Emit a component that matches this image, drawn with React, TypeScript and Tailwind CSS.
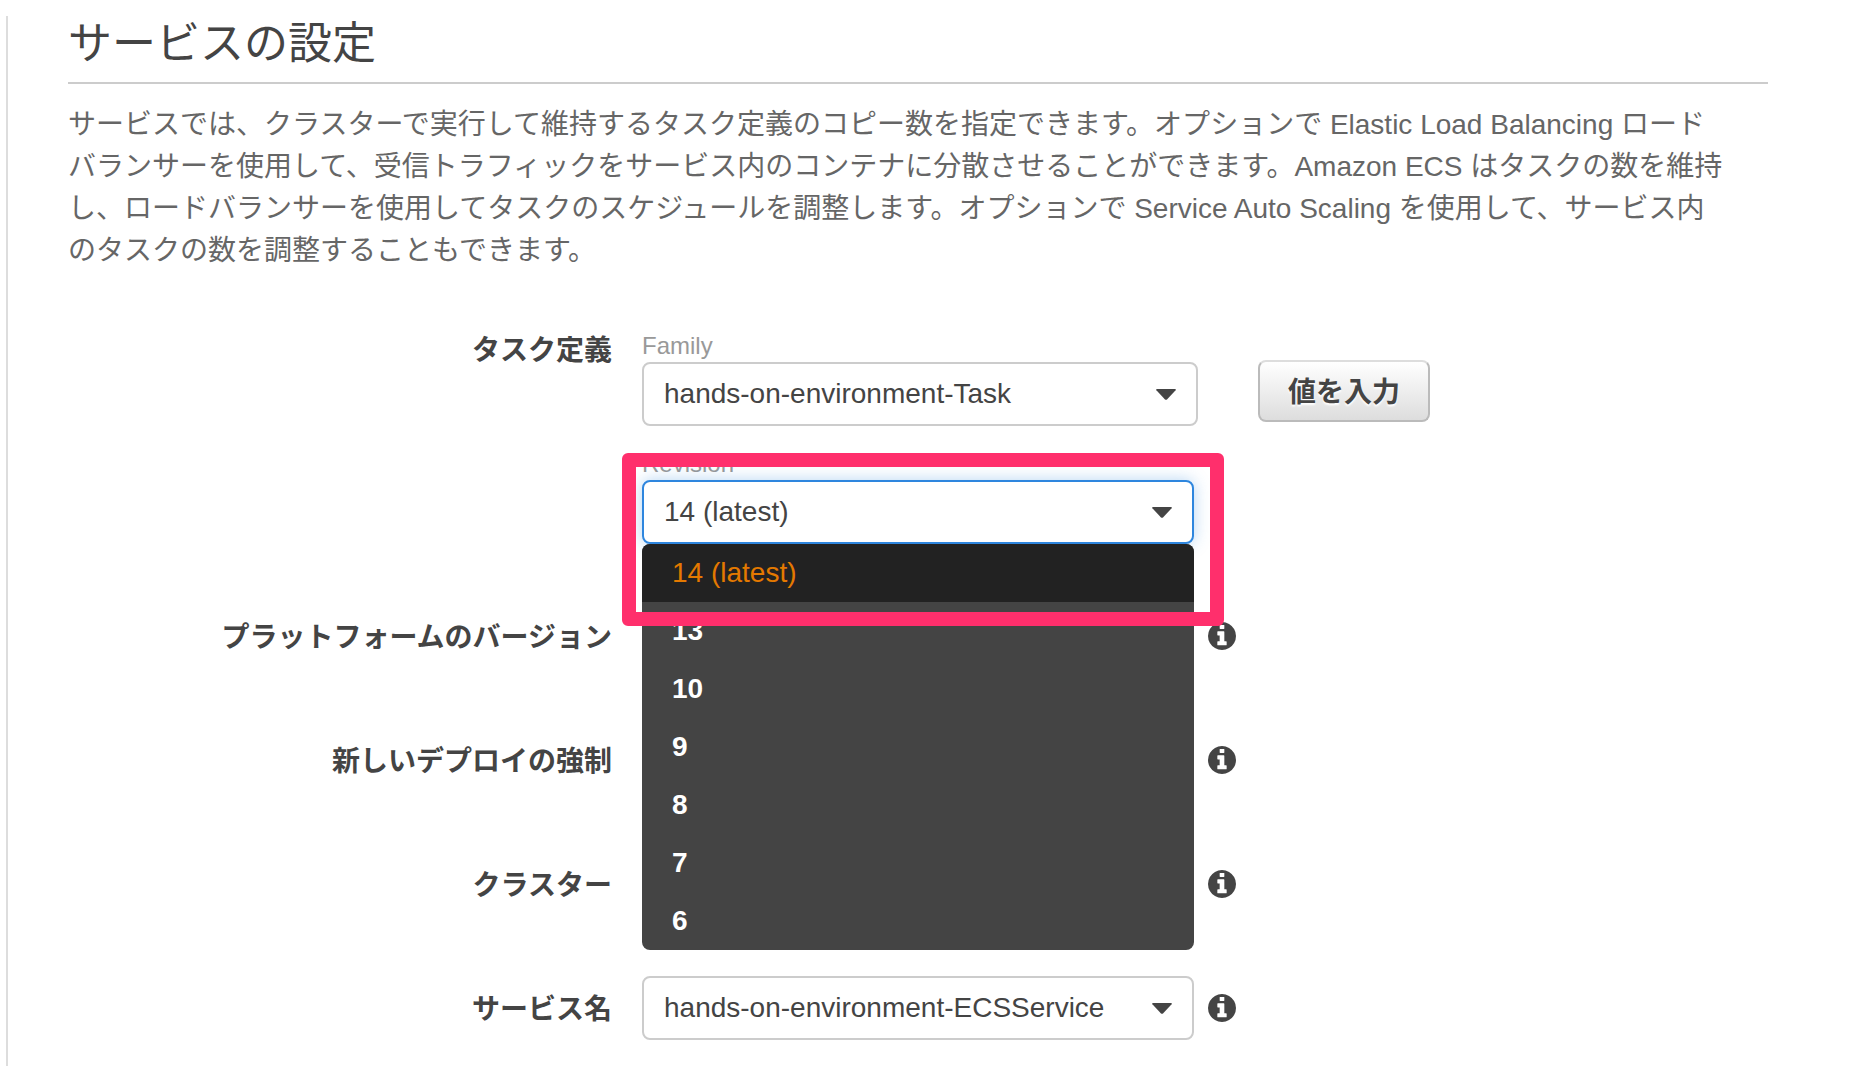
import { useState } from "react";
import type { ReactNode } from "react";

const REVISIONS = ["14 (latest)", "13", "10", "9", "8", "7", "6"];

function Caret() {
  return (
    <svg
      className="pointer-events-none absolute right-[22px] bottom-[26px] h-[11px] w-5 fill-[#444]"
      viewBox="0 0 20 11"
      aria-hidden="true"
    >
      <path d="M1 0h18q1.500 0 .6 1.200L11 10.400q-1 .9-2 0L.4 1.200Q-.5 0 1 0Z" />
    </svg>
  );
}

type SelectBoxProps = {
  id: string;
  value: string;
  options: string[];
  onChange?: (value: string) => void;
  active?: boolean;
};

function SelectBox({ id, value, options, onChange, active = false }: SelectBoxProps) {
  const border = active
    ? "border-[#2e86de] shadow-[0_0_16px_rgba(46,134,222,0.35)]"
    : "border-[#ccc]";
  return (
    <div className="relative">
      <select
        id={id}
        value={value}
        onChange={(e) => onChange?.(e.target.value)}
        className={`block h-16 w-full appearance-none rounded-lg border-2 bg-white pr-14 pl-5 text-[28px] text-[#444] outline-none ${border}`}
      >
        {options.map((o) => (
          <option key={o}>{o}</option>
        ))}
      </select>
      <Caret />
    </div>
  );
}

function InfoButton({ label }: { label: string }) {
  return (
    <button type="button" aria-label={label} className="shrink-0">
      <svg className="block size-7 fill-[#444]" viewBox="0 128 1536 1536" aria-hidden="true">
        <path d="M1024 1376v-160q0-14-9-23t-23-9h-96v-512q0-14-9-23t-23-9h-320q-14 0-23 9t-9 23v160q0 14 9 23t23 9h96v320h-96q-14 0-23 9t-9 23v160q0 14 9 23t23 9h448q14 0 23-9t9-23zm-128-896v-160q0-14-9-23t-23-9h-192q-14 0-23 9t-9 23v160q0 14 9 23t23 9h192q14 0 23-9t9-23zm640 416q0 209-103 385.500t-279.500 279.500-385.500 103-385.500-103-279.500-279.500-103-385.500 103-385.500 279.500-279.500 385.500-103 385.500 103 279.500 279.500 103 385.500z" />
      </svg>
    </button>
  );
}

function FormRow({ label, htmlFor, children }: { label: string; htmlFor?: string; children?: ReactNode }) {
  return (
    <div className="grid grid-cols-[32%_1fr] items-center gap-x-[30px]">
      <label htmlFor={htmlFor} className="pt-1 text-right text-[28px] leading-8 font-bold whitespace-nowrap">
        {label}
      </label>
      <div className="flex items-center gap-[14px]">
        <div className="h-16 w-full max-w-[552px]">{children}</div>
        <InfoButton label={label} />
      </div>
    </div>
  );
}

export default function App() {
  const [revision, setRevision] = useState(REVISIONS[0]);

  return (
    <div className="flex min-h-screen flex-col bg-white pt-4 pl-[6px] font-['Liberation_Sans','Noto_Sans_CJK_JP',sans-serif] text-[#444]">
      <main lang="ja" className="flex-1 border-l-2 border-[#ddd] pr-[92px] pl-[60px]">
        <h1 className="border-b-2 border-[#ccc] pb-[10px] text-[44px] leading-14">サービスの設定</h1>
        <p className="mt-5 pr-11 text-[28px] leading-[42px] text-[#666]">
          サービスでは、クラスターで実行して維持するタスク定義のコピー数を指定できます。オプションで Elastic Load Balancing ロードバランサーを使用して、受信トラフィックをサービス内のコンテナに分散させることができます。Amazon ECS はタスクの数を維持し、ロードバランサーを使用してタスクのスケジュールを調整します。オプションで Service Auto Scaling を使用して、サービス内のタスクの数を調整することもできます。
        </p>

        <form className="mt-[62px] flex flex-col gap-[60px]">
          <div className="grid grid-cols-[32%_1fr] gap-x-[30px]">
            <span className="text-right text-[28px] leading-[34px] font-bold">タスク定義</span>
            <div className="flex flex-col gap-[26px]">
              <div className="flex items-end gap-[60px]">
                <div className="w-full max-w-[556px]">
                  <label htmlFor="family" className="block pb-1 text-2xl leading-6 text-[#999]">
                    Family
                  </label>
                  <SelectBox id="family" value="hands-on-environment-Task" options={["hands-on-environment-Task"]} />
                </div>
                <button
                  type="button"
                  className="mb-1 h-[62px] shrink-0 rounded-lg border-2 border-[#bbb] border-t-[#ddd] bg-linear-to-b from-white to-[#ddd] px-7 pt-1 text-[28px] leading-8 font-bold [text-shadow:0_2px_2px_#fff]"
                >
                  値を入力
                </button>
              </div>

              <div className="relative w-full max-w-[552px]">
                <label htmlFor="revision" className="block pb-1 text-2xl leading-6 text-[#999]">
                  Revision
                </label>
                <SelectBox id="revision" value={revision} options={REVISIONS} onChange={setRevision} active />
                <ul
                  role="listbox"
                  aria-label="Revision"
                  className="absolute inset-x-0 top-full z-10 overflow-hidden rounded-lg bg-[#444] text-[28px] text-white"
                >
                  {REVISIONS.map((r) => (
                    <li
                      key={r}
                      role="option"
                      aria-selected={r === revision}
                      onClick={() => setRevision(r)}
                      className={`flex h-[58px] cursor-pointer items-center pl-[30px] ${
                        r === revision ? "bg-[#222] text-[#e47900]" : "font-bold"
                      }`}
                    >
                      {r}
                    </li>
                  ))}
                </ul>
                {/* highlight frame around the latest revision */}
                <div className="pointer-events-none absolute top-px -right-[30px] -left-5 z-20 h-[173px] rounded-md border-14 border-[#ff2f6c]" />
              </div>
            </div>
          </div>

          <FormRow label="プラットフォームのバージョン" />
          <FormRow label="新しいデプロイの強制" />
          <FormRow label="クラスター" />
          <FormRow label="サービス名" htmlFor="service">
            <SelectBox id="service" value="hands-on-environment-ECSService" options={["hands-on-environment-ECSService"]} />
          </FormRow>
        </form>
      </main>
    </div>
  );
}
